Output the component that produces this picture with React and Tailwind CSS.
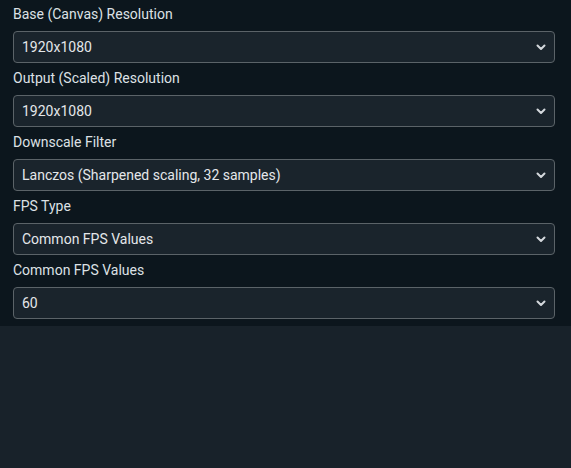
import React from "react";

const fields = [
  { label: "Base (Canvas) Resolution", value: "1920x1080" },
  { label: "Output (Scaled) Resolution", value: "1920x1080" },
  { label: "Downscale Filter", value: "Lanczos (Sharpened scaling, 32 samples)" },
  { label: "FPS Type", value: "Common FPS Values" },
  { label: "Common FPS Values", value: "60" },
];

function Chevron() {
  return (
    <svg width="10" height="7" viewBox="0 0 10 7" className="shrink-0">
      <path d="M1.5 1.5 L5 5 L8.5 1.5" fill="none" stroke="#d4d8dc" strokeWidth="2" strokeLinecap="round" strokeLinejoin="round" />
    </svg>
  );
}

export default function App() {
  return (
    <div className="w-[571px] h-[468px] bg-[#18222a] text-[14px]" style={{ fontFamily: "Roboto, 'Noto Sans', sans-serif" }}>
      <div className="bg-[#0c161d] h-[326px] pl-[13px] pr-[16px] pt-[5px]">
        {fields.map((f) => (
          <div key={f.label} className="flex flex-col">
            <div className="h-[26px] leading-[18px] text-[#dde1e5]">{f.label}</div>
            <div className="h-[32px] mb-[6px] flex items-center justify-between rounded-[4px] border border-[#5b6368] bg-[#1a242c] pl-[8px] pr-[8px] text-[#e4e7ea]">
              <span>{f.value}</span>
              <Chevron />
            </div>
          </div>
        ))}
      </div>
    </div>
  );
}
